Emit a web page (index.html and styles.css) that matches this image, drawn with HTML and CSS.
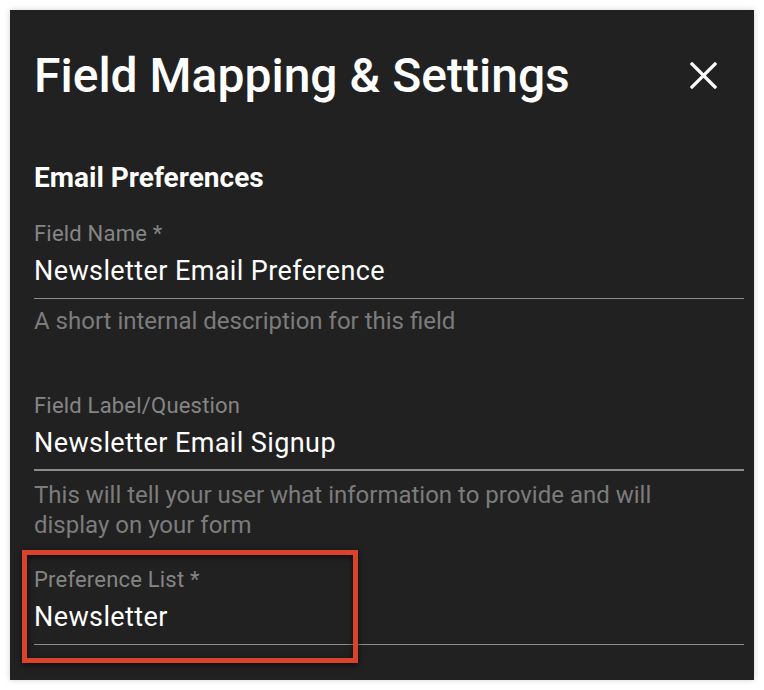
FILE: index.html
```html
<!DOCTYPE html>
<html lang="en">
<head>
<meta charset="utf-8">
<title>Field Mapping &amp; Settings</title>
<link rel="stylesheet" href="styles.css">
</head>
<body>
<div class="panel">
  <div class="header">
    <h1 class="title">Field Mapping &amp; Settings</h1>
    <button class="close" aria-label="Close">
      <svg width="27" height="27" viewBox="0 0 27 27"><path d="M2 2 L25 25 M25 2 L2 25" stroke="#fff" stroke-width="3.2" stroke-linecap="square" fill="none"/></svg>
    </button>
  </div>
  <h2 class="section">Email Preferences</h2>
  <div class="field">
    <div class="label">Field Name *</div>
    <div class="input">Newsletter Email Preference</div>
    <div class="helper">A short internal description for this field</div>
  </div>
  <div class="field">
    <div class="label">Field Label/Question</div>
    <div class="input focused">Newsletter Email Signup</div>
    <div class="helper after-focus">This will tell your user what information to provide and will display on your form</div>
  </div>
  <div class="field">
    <div class="label">Preference List *</div>
    <div class="input">Newsletter</div>
  </div>
  <div class="highlight"></div>
</div>
</body>
</html>
```
FILE: styles.css
```css
html, body {
  margin: 0;
  padding: 0;
  background: #ffffff;
}
body {
  font-family: Roboto, "Liberation Sans", sans-serif;
}
.panel {
  position: relative;
  margin: 10px;
  width: 744px;
  height: 670px;
  background: #212121;
  box-shadow: 0 0 6px rgba(0,0,0,0.18);
  padding: 37.6px 10px 0 24px;
  box-sizing: border-box;
  overflow: hidden;
}
.header {
  display: flex;
  align-items: center;
  justify-content: space-between;
  padding-right: 27px;
}
.title {
  margin: 0;
  font-size: 48px;
  line-height: 56px;
  font-weight: 500;
  color: #ffffff;
}
.close {
  background: none;
  border: 0;
  padding: 0;
  margin: 0;
  width: 27px;
  height: 27px;
  display: flex;
}
.section {
  margin: 58.3px 0 0 0;
  font-size: 28px;
  line-height: 32px;
  font-weight: 700;
  color: #ffffff;
}
.field {
  margin-top: 27.7px;
}
.label {
  font-size: 22px;
  line-height: 24px;
  letter-spacing: 0.2px;
  color: #858585;
}
.input {
  margin-top: 9.3px;
  font-size: 27px;
  line-height: 32px;
  letter-spacing: 0.4px;
  color: #ffffff;
  padding-bottom: 11px;
  border-bottom: 1px solid #8c8c8c;
}
.input.focused {
  padding-bottom: 10px;
  border-bottom: 2.5px solid #8c8c8c;
}
.helper {
  margin-top: 7px;
  font-size: 24px;
  line-height: 30px;
  min-height: 60px;
  color: #7c7c7c;
  padding-right: 60px;
}
.helper.after-focus {
  margin-top: 9.5px;
}
.highlight {
  position: absolute;
  left: 12px;
  top: 540px;
  width: 336px;
  height: 113px;
  box-sizing: border-box;
  border: 5.5px solid #d9432b;
  box-shadow: 0 2px 6px rgba(0,0,0,0.6), inset 0 2px 6px rgba(0,0,0,0.6);
}
```
